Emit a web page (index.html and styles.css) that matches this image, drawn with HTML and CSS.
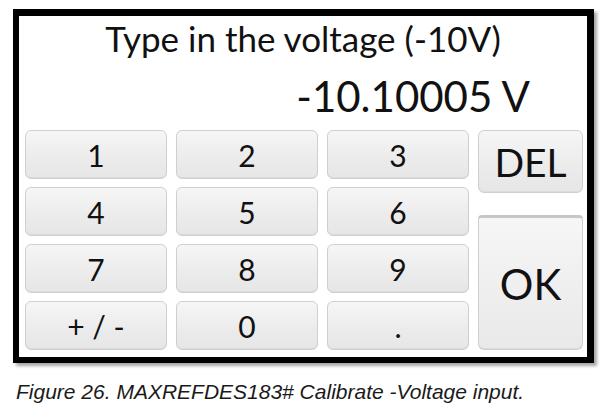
FILE: index.html
```html
<!DOCTYPE html>
<html>
<head>
<meta charset="utf-8">
<link rel="stylesheet" href="styles.css">
</head>
<body>
<div class="frame">
  <div class="title">Type in the voltage (-10V)</div>
  <div class="value">-10.10005 V</div>
  <div class="keypad">
    <div class="digits">
      <div class="key">1</div>
      <div class="key">2</div>
      <div class="key">3</div>
      <div class="key">4</div>
      <div class="key">5</div>
      <div class="key">6</div>
      <div class="key">7</div>
      <div class="key">8</div>
      <div class="key">9</div>
      <div class="key">+ / -</div>
      <div class="key">0</div>
      <div class="key">.</div>
    </div>
    <div class="actions">
      <div class="key key-del">DEL</div>
      <div class="key key-ok">OK</div>
    </div>
  </div>
</div>
<p class="caption">Figure 26. MAXREFDES183# Calibrate -Voltage input.</p>
</body>
</html>
```

FILE: styles.css
```css
html, body {
  margin: 0;
  padding: 0;
  background: #ffffff;
}

body {
  font-family: "Lato", "Open Sans", sans-serif;
  color: #111111;
}

.frame {
  box-sizing: border-box;
  width: 581px;
  height: 354px;
  margin: 9px 0 0 13px;
  border-style: solid;
  border-color: #000000;
  border-width: 7px 7px 6px 6px;
  background: #ffffff;
  box-shadow: 3px 3px 3px rgba(0, 0, 0, 0.35);
  display: flex;
  flex-direction: column;
}

.title {
  font-size: 35px;
  line-height: 40px;
  padding-top: 2px;
  text-align: center;
}

.value {
  font-size: 42px;
  line-height: 50px;
  margin-top: 13px;
  text-align: right;
  padding-right: 57px;
}

.keypad {
  display: flex;
  gap: 9px;
  margin-top: 9px;
  padding: 0 4px 0 6px;
}

.digits {
  display: grid;
  grid-template-columns: repeat(3, 142px);
  grid-template-rows: repeat(4, 49px);
  column-gap: 9px;
  row-gap: 8px;
}

.actions {
  flex: 1;
  display: flex;
  flex-direction: column;
  justify-content: space-between;
}

.key {
  box-sizing: border-box;
  display: flex;
  align-items: center;
  justify-content: center;
  border: 1px solid #cfcfcf;
  border-radius: 6px;
  background: linear-gradient(#f6f6f6, #ececec 55%, #e6e6e6);
  box-shadow: inset 0 -1px 0 #dcdcdc;
  font-size: 30px;
  color: #111111;
}

.key-del {
  height: 63px;
  font-size: 39px;
}

.key-ok {
  height: 135px;
  font-size: 42px;
  border-top: 3px solid #c6c6c6;
  border-radius: 4px 4px 6px 6px;
  background: linear-gradient(#f7f6f7, #efeeef 60%, #e9e9e9);
}

.caption {
  margin: 0;
  padding: 17px 0 0 16px;
  font-family: "Liberation Sans", Arial, sans-serif;
  font-style: italic;
  font-size: 21px;
  line-height: 24px;
  color: #1a1a1a;
}
```
